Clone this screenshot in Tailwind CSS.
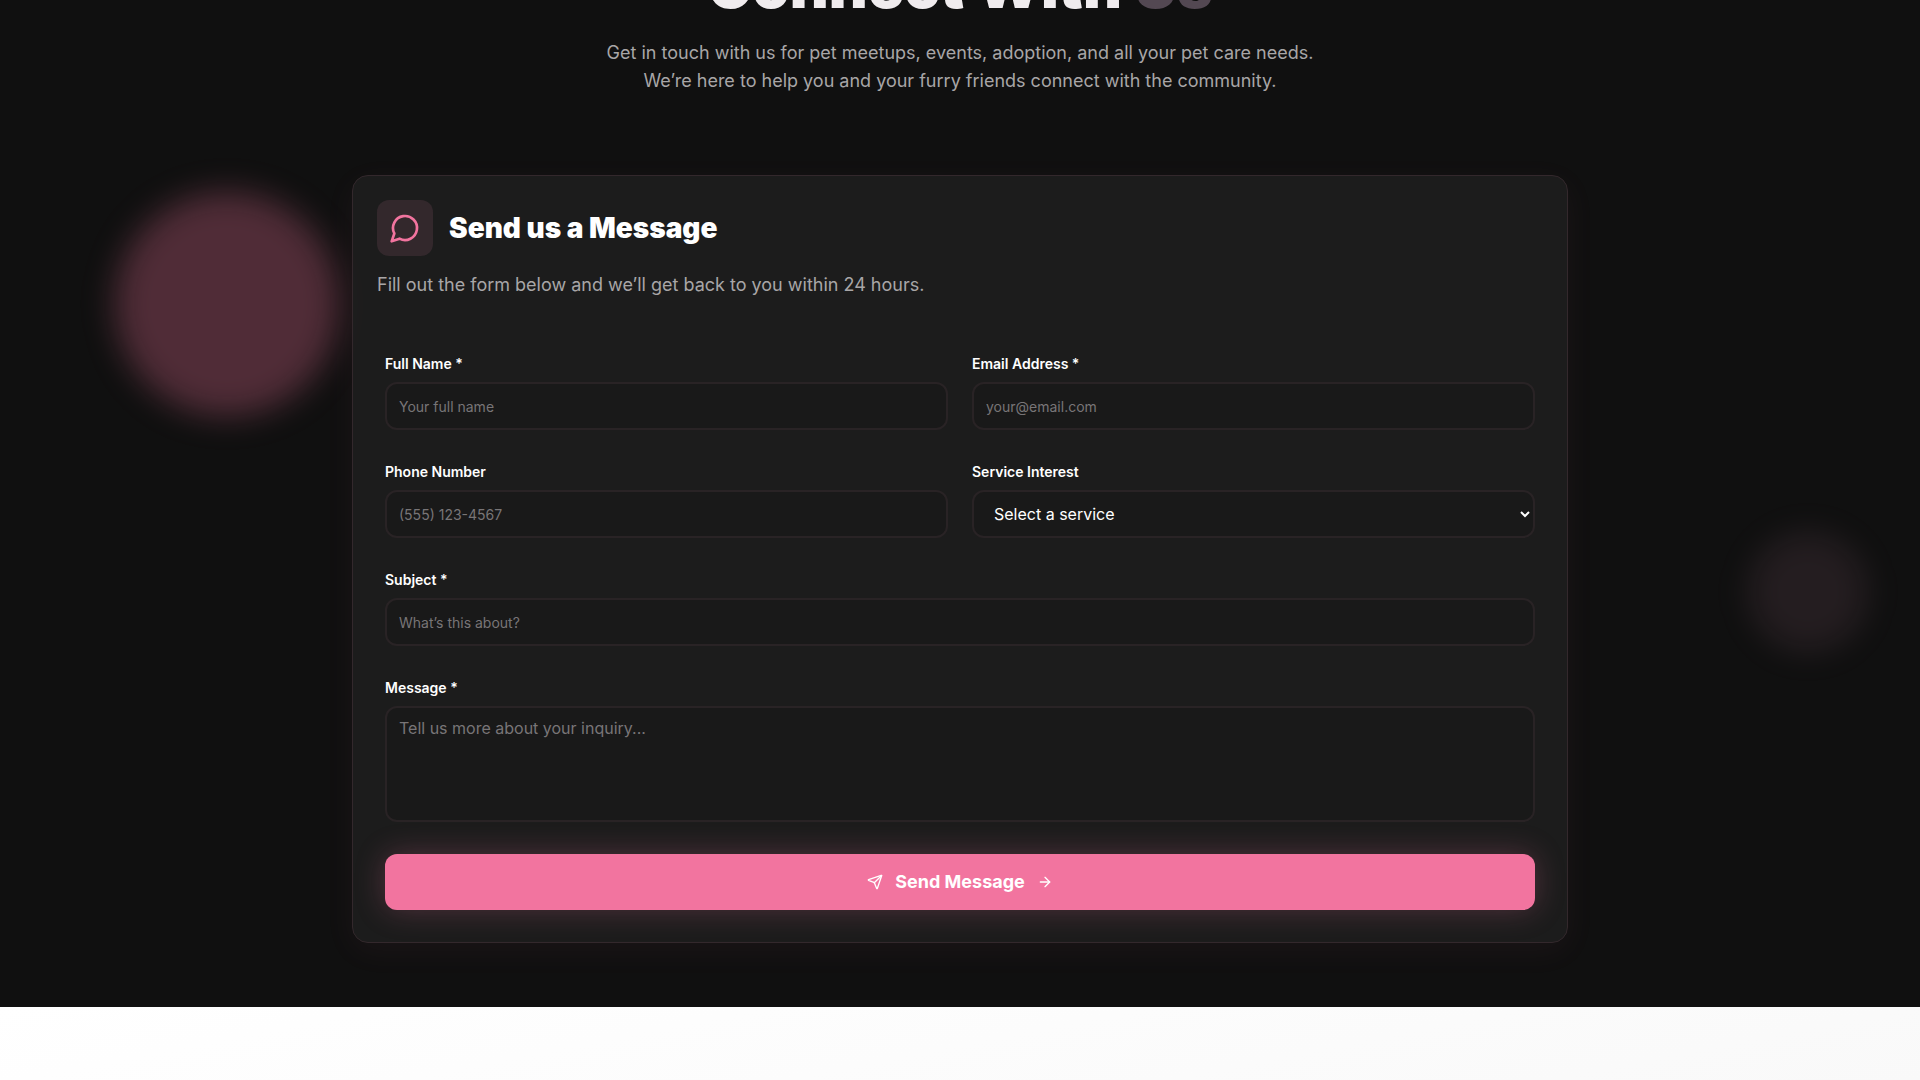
<!DOCTYPE html>
<html lang="en">
  <head>
    <meta charset="UTF-8" />
    <meta name="viewport" content="width=device-width, initial-scale=1.0" />
    <script src="https://cdn.jsdelivr.net/npm/@tailwindcss/browser@4"></script>
    <title>Connect With Us</title>
  </head>
  <body class="bg-[#fafafa] font-[Inter,sans-serif] overflow-x-hidden">
    <section class="relative overflow-hidden bg-[#101010] px-8 pb-16">
      <!-- background blobs -->
      <div class="absolute left-[6%] top-48 size-56 rounded-full bg-[#ee7399]/29 blur-lg"></div>
      <div class="absolute right-13 top-133 size-30 rounded-full bg-[#d893b0]/10 blur-lg"></div>

      <header class="relative text-center">
        <h1 class="-mt-12 text-[60px] leading-[68px] font-black text-[#f0ecee]">
          Connect With <span class="text-[#534852]">Us</span>
        </h1>
        <p class="mx-auto mt-[19px] max-w-3xl text-lg leading-7 text-[#a8a6a7]">
          Get in touch with us for pet meetups, events, adoption, and all your pet care needs.<br />
          We’re here to help you and your furry friends connect with the community.
        </p>
      </header>

      <div class="relative mx-auto mt-20 max-w-[1216px] rounded-2xl border border-[#33282c] bg-[#1d1d1d]/95 p-6 shadow-[0_8px_32px_rgba(242,116,159,0.05)]">
        <div class="flex items-center gap-4">
          <div class="flex size-14 items-center justify-center rounded-xl bg-[#33282c]">
            <svg class="size-8 text-[#f2749f]" viewBox="0 0 24 24" fill="none" stroke="currentColor" stroke-width="2" stroke-linecap="round" stroke-linejoin="round">
              <path d="M7.9 20A9 9 0 1 0 4 16.1L2 22Z" />
            </svg>
          </div>
          <h2 class="text-[28px] leading-8 font-black text-white">Send us a Message</h2>
        </div>
        <p class="mt-4 text-lg leading-[26px] text-[#a8a6a7]">Fill out the form below and we’ll get back to you within 24 hours.</p>

        <form class="mt-14 flex flex-col gap-8 px-2 pb-2">
          <div class="grid grid-cols-2 gap-x-6 gap-y-8">
            <div class="flex flex-col gap-2">
              <label for="name" class="text-sm font-semibold text-white">Full Name *</label>
              <input id="name" type="text" placeholder="Your full name" class="h-12 w-full rounded-xl border-2 border-[#292325] bg-[#191919] px-3 text-sm text-white placeholder:text-[#787577]" />
            </div>
            <div class="flex flex-col gap-2">
              <label for="email" class="text-sm font-semibold text-white">Email Address *</label>
              <input id="email" type="email" placeholder="your@email.com" class="h-12 w-full rounded-xl border-2 border-[#292325] bg-[#191919] px-3 text-sm text-white placeholder:text-[#787577]" />
            </div>
            <div class="flex flex-col gap-2">
              <label for="phone" class="text-sm font-semibold text-white">Phone Number</label>
              <input id="phone" type="tel" placeholder="(555) 123-4567" class="h-12 w-full rounded-xl border-2 border-[#292325] bg-[#191919] px-3 text-sm text-white placeholder:text-[#787577]" />
            </div>
            <div class="flex flex-col gap-2">
              <label for="service" class="text-sm font-semibold text-white">Service Interest</label>
              <select id="service" class="h-12 w-full rounded-xl border-2 border-[#292325] bg-[#191919] px-4 text-base text-white">
                <option>Select a service</option>
              </select>
            </div>
          </div>
          <div class="flex flex-col gap-2">
            <label for="subject" class="text-sm font-semibold text-white">Subject *</label>
            <input id="subject" type="text" placeholder="What’s this about?" class="h-12 w-full rounded-xl border-2 border-[#292325] bg-[#191919] px-3 text-sm text-white placeholder:text-[#787577]" />
          </div>
          <div class="flex flex-col gap-2">
            <label for="message" class="text-sm font-semibold text-white">Message *</label>
            <textarea id="message" placeholder="Tell us more about your inquiry..." class="h-[116px] w-full resize-none rounded-xl border-2 border-[#292325] bg-[#191919] px-3 py-2 text-base text-white placeholder:text-[#787577]"></textarea>
          </div>
          <button type="submit" class="flex h-14 w-full items-center justify-center gap-3 rounded-xl bg-[#f2749f] text-lg font-bold text-white shadow-[0_0_30px_rgba(242,116,159,0.25)]">
            <svg class="size-4" viewBox="0 0 24 24" fill="none" stroke="currentColor" stroke-width="2" stroke-linecap="round" stroke-linejoin="round">
              <path d="M14.536 21.686a.5.5 0 0 0 .937-.024l6.5-19a.496.496 0 0 0-.635-.635l-19 6.5a.5.5 0 0 0-.024.937l7.93 3.18a2 2 0 0 1 1.112 1.11z" />
              <path d="m21.854 2.147-10.94 10.939" />
            </svg>
            Send Message
            <svg class="size-4" viewBox="0 0 24 24" fill="none" stroke="currentColor" stroke-width="2" stroke-linecap="round" stroke-linejoin="round">
              <path d="M5 12h14" />
              <path d="m12 5 7 7-7 7" />
            </svg>
          </button>
        </form>
      </div>
    </section>
    <section class="h-96 bg-linear-to-br from-white to-[#f5f5f5]"></section>
  </body>
</html>
